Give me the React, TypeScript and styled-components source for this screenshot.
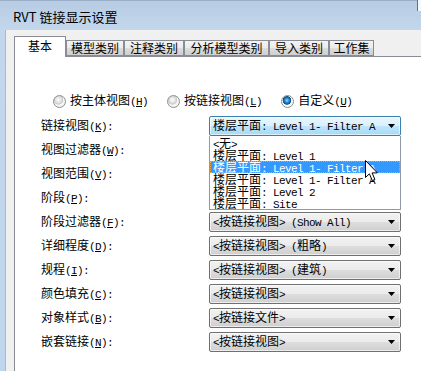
import styled, { createGlobalStyle } from "styled-components";

const GlobalStyle = createGlobalStyle`
    html, body {
        margin: 0;
        padding: 0;
        overflow: hidden;
    }
`;

const cjk = `"Noto Sans CJK SC", "Noto Sans", sans-serif`;

const Lat = styled.span`
    font-family: "Liberation Mono", monospace;
    font-size: 11px;
    letter-spacing: -0.6px;
    white-space: pre;
`;

const Key = styled.span`
    text-decoration: underline;
`;

// latin runs rendered in a narrow mono face, like the bitmap font in the dialog
const Mixed = ({ text }: { text: string }) => (
    <>
        {text
            .split(/([\u2E80-\u9FFF\uFF00-\uFFEF]+)/)
            .filter(Boolean)
            .map((part, i) =>
                /[\u2E80-\u9FFF\uFF00-\uFFEF]/.test(part) ? <span key={i}>{part}</span> : <Lat key={i}>{part}</Lat>
            )}
    </>
);

const Mnemonic = ({ name, k }: { name: string; k: string }) => (
    <>
        {name}
        <Lat>
            (<Key>{k}</Key>)
        </Lat>
    </>
);

const tabs = [
    { label: "基本", w: 52 },
    { label: "模型类别", w: 58 },
    { label: "注释类别", w: 60 },
    { label: "分析模型类别", w: 85 },
    { label: "导入类别", w: 60 },
    { label: "工作集", w: 45 },
];

const radios = [
    { name: "按主体视图", k: "H", checked: false },
    { name: "按链接视图", k: "L", checked: false },
    { name: "自定义", k: "U", checked: true },
];

const fields = [
    { name: "链接视图", k: "K", value: "楼层平面: Level 1- Filter A" },
    { name: "视图过滤器", k: "W", value: "<按链接视图>" },
    { name: "视图范围", k: "V", value: "<按链接视图>" },
    { name: "阶段", k: "P", value: "<按链接视图>" },
    { name: "阶段过滤器", k: "F", value: "<按链接视图> (Show All)" },
    { name: "详细程度", k: "D", value: "<按链接视图> (粗略)" },
    { name: "规程", k: "I", value: "<按链接视图> (建筑)" },
    { name: "颜色填充", k: "C", value: "<按链接视图>" },
    { name: "对象样式", k: "B", value: "<按链接文件>" },
    { name: "嵌套链接", k: "N", value: "<按链接视图>" },
];

const options = [
    "<无>",
    "楼层平面: Level 1",
    "楼层平面: Level 1- Filter A",
    "楼层平面: Level 1- Filter A",
    "楼层平面: Level 2",
    "楼层平面: Site",
];

const Arrow = () => (
    <svg width="7" height="4" viewBox="0 0 7 4">
        <path d="M0 0H7L3.5 4Z" fill="#000" />
    </svg>
);

const Cursor = () => (
    <svg width="13" height="22" viewBox="0 0 13 22">
        <path d="M0.5 0.5V17.5L4.4 13.8L7.3 20.6L9.9 19.5L7.1 12.9H12.4Z" fill="#fff" stroke="#000" strokeLinejoin="miter" />
    </svg>
);

const App = () => {
    return (
        <>
            <GlobalStyle />
            <Window>
                <TitleBar>RVT 链接显示设置</TitleBar>
                <CaptionEdge />
                <Client>
                    <TabStrip>
                        {tabs.map((t, i) => (
                            <Tab key={t.label} $w={t.w} $active={i === 0}>
                                {t.label}
                            </Tab>
                        ))}
                    </TabStrip>
                    <Panel>
                        <RadioRow>
                            {radios.map((r) => (
                                <RadioItem key={r.k}>
                                    <RadioDot $checked={r.checked} />
                                    <span>
                                        <Mnemonic name={r.name} k={r.k} />
                                    </span>
                                </RadioItem>
                            ))}
                        </RadioRow>
                        <Form>
                            {fields.map((f, i) => (
                                <Row key={f.k}>
                                    <Label>
                                        <Mnemonic name={f.name} k={f.k} />
                                        <Lat>:</Lat>
                                    </Label>
                                    <SelectWrap>
                                        <Select $open={i === 0}>
                                            <SelectText>
                                                <Mixed text={f.value} />
                                            </SelectText>
                                            <Arrow />
                                        </Select>
                                        {i === 0 && (
                                            <List>
                                                {options.map((o, j) => (
                                                    <Option key={j} $selected={j === 2}>
                                                        <Mixed text={o} />
                                                    </Option>
                                                ))}
                                                <Pointer>
                                                    <Cursor />
                                                </Pointer>
                                            </List>
                                        )}
                                    </SelectWrap>
                                </Row>
                            ))}
                        </Form>
                    </Panel>
                </Client>
            </Window>
        </>
    );
};

export default App;

const Window = styled.div`
    position: relative;
    display: flex;
    flex-direction: column;
    width: 421px;
    height: 371px;
    overflow: hidden;
    background: linear-gradient(to bottom, #b7cce3 0px, #c3d7ec 30px, #bfd6ee 100%);
    font-family: ${cjk};
    font-size: 12px;
    color: #000;
`;

const TitleBar = styled.div`
    display: flex;
    align-items: center;
    height: 30px;
    padding: 2px 0 0 13px;
    box-sizing: border-box;
    border-top: 1px solid #9aafc7;
    font-size: 13px;
    color: #000;
`;

const CaptionEdge = styled.div`
    position: absolute;
    top: 0;
    right: 0;
    width: 3px;
    height: 11px;
    border-left: 1px solid #5f6f84;
    background: #f4f7fb;
`;

const Client = styled.div`
    flex: 1;
    display: flex;
    flex-direction: column;
    margin-left: 5px;
    padding: 6px 0 0 8px;
    border-left: 1px solid #a9b7c8;
    background: #f0f0f0;
`;

const TabStrip = styled.div`
    display: flex;
    align-items: flex-end;
    height: 20px;
`;

const Tab = styled.div<{ $w: number; $active?: boolean }>`
    position: relative;
    z-index: ${(p) => (p.$active ? 1 : 0)};
    display: flex;
    align-items: center;
    justify-content: center;
    box-sizing: border-box;
    width: ${(p) => p.$w}px;
    height: ${(p) => (p.$active ? 21 : 16)}px;
    margin-bottom: ${(p) => (p.$active ? -1 : 0)}px;
    padding-bottom: ${(p) => (p.$active ? 2 : 0)}px;
    border: 1px solid #898c95;
    border-bottom: ${(p) => (p.$active ? "none" : "1px solid #898c95")};
    background: ${(p) =>
        p.$active ? "#fff" : "linear-gradient(to bottom, #f3f3f3 0%, #ebebeb 50%, #dddddd 51%, #cfcfcf 100%)"};
    line-height: 14px;
    white-space: nowrap;
`;

const Panel = styled.div`
    flex: 1;
    padding-top: 36px;
    border-left: 1px solid #898c95;
    border-top: 1px solid #898c95;
    background: #fff;
`;

const RadioRow = styled.div`
    display: flex;
    align-items: center;
    gap: 19px;
    height: 16px;
    padding-left: 38px;
`;

const RadioItem = styled.div`
    display: flex;
    align-items: center;
    gap: 4px;
    line-height: 16px;
`;

const RadioDot = styled.span<{ $checked?: boolean }>`
    display: inline-block;
    box-sizing: border-box;
    width: 13px;
    height: 13px;
    border-radius: 50%;
    border: 1px solid #8e8f8f;
    background: ${(p) =>
        p.$checked
            ? "radial-gradient(circle at 45% 40%, #9fe0ff 0px, #2a8fd8 2px, #0d4f8c 4px, #ffffff 4.6px, #e6e6e6 100%)"
            : "radial-gradient(circle at 40% 35%, #ffffff 0px, #e0e0e0 3px, #c8c8c8 4.5px, #f6f6f6 5px, #ececec 100%)"};
`;

const Form = styled.div`
    display: grid;
    grid-auto-rows: 20px;
    row-gap: 4px;
    margin-top: 6px;
    padding-left: 26px;
`;

const Row = styled.div`
    display: grid;
    grid-template-columns: 168px 192px;
    align-items: center;
`;

const Label = styled.div`
    line-height: 20px;
    white-space: nowrap;
`;

const SelectWrap = styled.div`
    position: relative;
    height: 20px;
`;

const Select = styled.div<{ $open?: boolean }>`
    display: flex;
    align-items: center;
    justify-content: space-between;
    box-sizing: border-box;
    height: 20px;
    padding: 0 5px 0 3px;
    border: 1px solid ${(p) => (p.$open ? "#3c7fb1" : "#707070")};
    border-radius: 2px;
    background: ${(p) =>
        p.$open
            ? "linear-gradient(to bottom, #eaf6fd 0%, #d9f0fc 50%, #bee6fd 51%, #a7d9f5 100%)"
            : "linear-gradient(to bottom, #f2f2f2 0%, #ebebeb 50%, #dddddd 51%, #cfcfcf 100%)"};
    box-shadow: inset 0 0 0 1px rgba(255, 255, 255, 0.6);
`;

const SelectText = styled.span`
    line-height: 18px;
    white-space: nowrap;
`;

const List = styled.div`
    position: absolute;
    top: 20px;
    left: 0;
    z-index: 2;
    box-sizing: border-box;
    width: 192px;
    padding: 1px 0 0;
    border: 1px solid #8e9aa8;
    border-top: none;
    background: #fff;
`;

const Option = styled.div<{ $selected?: boolean }>`
    box-sizing: border-box;
    height: 12px;
    padding-left: 3px;
    line-height: 12px;
    white-space: nowrap;
    overflow: visible;
    color: ${(p) => (p.$selected ? "#fff" : "#000")};
    background: ${(p) => (p.$selected ? "#3399ff" : "transparent")};
    outline: ${(p) => (p.$selected ? "1px dotted #f0a040" : "none")};
    outline-offset: -1px;
`;

const Pointer = styled.div`
    position: absolute;
    left: 155px;
    top: 24px;
    line-height: 0;
`;
